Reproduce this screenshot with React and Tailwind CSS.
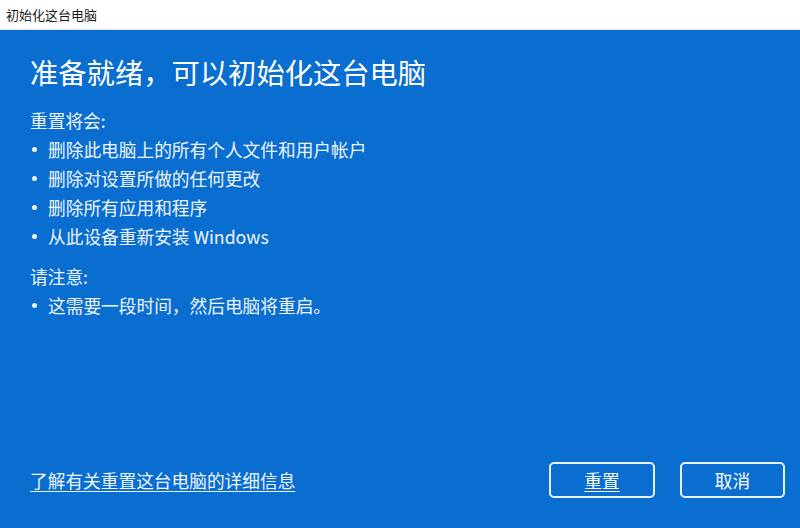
import React from 'react';

const font = { fontFamily: '"Noto Sans CJK SC", "Noto Sans", sans-serif' };

const Item = ({ children }) => (
  <div className="flex items-center leading-[29px]">
    <span className="w-[18px] flex">
      <span className="ml-[2px] w-[5px] h-[5px] rounded-full bg-[#eef5ff]"></span>
    </span>
    <span>{children}</span>
  </div>
);

const App = () => {
  return (
    <div className="w-[800px] h-[528px] flex flex-col overflow-hidden" style={font}>
      <div className="h-[30px] bg-white border-b border-[#e3e6ea] flex items-center px-[6px] text-[13px] text-[#1a1a1a]">
        初始化这台电脑
      </div>
      <div className="flex-1 bg-[#0a6dd0] text-white flex flex-col px-[30px] pt-[22px] pb-[30px] pr-[15px]">
        <h1 className="text-[28.3px] leading-[40px] font-normal">准备就绪，可以初始化这台电脑</h1>
        <div className="mt-[14px] text-[17.7px] text-[#eef5ff]">
          <div className="leading-[29px]">重置将会:</div>
          <Item>删除此电脑上的所有个人文件和用户帐户</Item>
          <Item>删除对设置所做的任何更改</Item>
          <Item>删除所有应用和程序</Item>
          <Item>从此设备重新安装 Windows</Item>
          <div className="leading-[29px] mt-[11px]">请注意:</div>
          <Item>这需要一段时间，然后电脑将重启。</Item>
        </div>
        <div className="mt-auto flex items-center">
          <a className="text-[17.7px] underline underline-offset-[3px] text-[#eef5ff]">了解有关重置这台电脑的详细信息</a>
          <div className="ml-auto flex gap-[25px]">
            <button className="w-[106px] h-[36px] rounded-[5px] border-2 border-[#e8f1ff] text-[17.7px] flex items-center justify-center underline underline-offset-[3px]">
              重置
            </button>
            <button className="w-[105px] h-[36px] rounded-[5px] border-2 border-[#e8f1ff] text-[17.7px] flex items-center justify-center">
              取消
            </button>
          </div>
        </div>
      </div>
    </div>
  );
};

export default App;
